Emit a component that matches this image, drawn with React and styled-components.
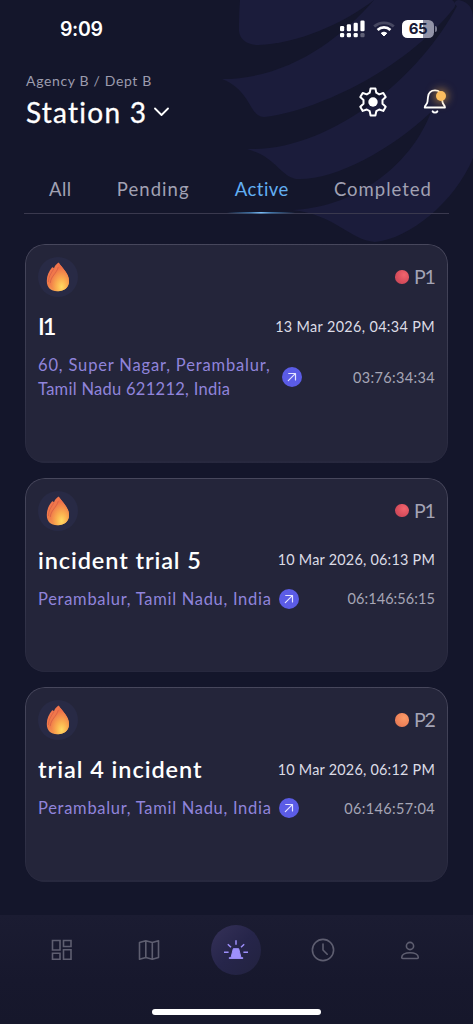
import React from "react";
import styled, { createGlobalStyle, css } from "styled-components";

const GlobalStyle = createGlobalStyle`
  * { box-sizing: border-box; }
  body { margin: 0; background: #14162b; }
`;

const Screen = styled.div`
  position: relative;
  width: 473px;
  height: 1024px;
  overflow: hidden;
  display: flex;
  flex-direction: column;
  background: #14162b;
  color: #fff;
  font-family: Lato, "Open Sans", sans-serif;
  white-space: nowrap;
`;

const Wings = styled.svg`
  position: absolute;
  top: 0;
  left: 0;
  pointer-events: none;
`;

const Content = styled.div`
  position: relative;
  flex: 1;
  display: flex;
  flex-direction: column;
`;

const StatusBar = styled.div`
  height: 57px;
  padding: 0 36px 0 60px;
  display: flex;
  align-items: center;
  justify-content: space-between;
`;

const Clock = styled.div`
  font: 600 19.5px/24px Inter, sans-serif;
  letter-spacing: -0.35px;
`;

const StatusIcons = styled.div`
  display: flex;
  align-items: center;
  gap: 7.5px;
`;

const Battery = styled.div`
  display: flex;
  align-items: center;
  gap: 1px;
  &::after {
    content: "";
    width: 2px;
    height: 6px;
    border-radius: 0 2px 2px 0;
    background: #77788d;
  }
`;

const BatteryBody = styled.div`
  width: 32px;
  height: 18px;
  border-radius: 5.5px;
  background: linear-gradient(90deg, #fff 65%, #9293a7 65%);
  color: #191a36;
  font: 700 15px/18px Inter, sans-serif;
  letter-spacing: -0.3px;
  text-align: center;
`;

const Header = styled.header`
  height: 99px;
  padding: 14px 23px 0 26px;
  display: flex;
  justify-content: space-between;
`;

const Agency = styled.div`
  font-size: 14px;
  line-height: 20px;
  letter-spacing: 0.65px;
  color: #9c9cae;
`;

const Station = styled.div`
  display: flex;
  align-items: center;
  gap: 7px;
  margin-top: 3px;
  font-size: 28px;
  line-height: 36px;
  letter-spacing: 1.25px;
  -webkit-text-stroke: 0.3px #fff;
`;

const Actions = styled.div`
  display: flex;
  align-items: flex-start;
  gap: 32.5px;
  padding-top: 16px;
`;

const BellButton = styled.div`
  position: relative;
  width: 30px;
  height: 30px;
`;

const BellDot = styled.span`
  position: absolute;
  top: 4px;
  left: 15.5px;
  width: 10px;
  height: 10px;
  border-radius: 50%;
  background: #fbbd5f;
  box-shadow: 0 0 8px 2px rgba(251, 180, 70, 0.55);
`;

const Tabs = styled.nav`
  height: 58px;
  margin: 0 24px;
  padding: 20px 17px 0 25px;
  display: flex;
  justify-content: space-between;
  background:
    linear-gradient(90deg, transparent, #3f74a8 35%, #78bdf8 50%, #3f74a8 65%, transparent) 203px 56px / 68px 1.5px no-repeat,
    linear-gradient(#3a394e, #3a394e) 0 56.5px / 100% 1.5px no-repeat;
`;

const Tab = styled.div`
  font-size: 18.5px;
  line-height: 26px;
  letter-spacing: ${(p) => p.$spacing || "0.5px"};
  color: ${(p) => (p.$active ? "#62aef2" : "#a1a1b3")};
`;

const CardList = styled.main`
  display: flex;
  flex-direction: column;
  gap: 15px;
  padding: 30px 25px 0;
`;

const Card = styled.article`
  position: relative;
  padding: 13px 13px 61.5px;
  border-radius: 20px;
  background: #24253a;
  &::before {
    content: "";
    position: absolute;
    inset: 0;
    padding: 1.4px;
    border-radius: inherit;
    background: linear-gradient(#47475c, #3a3b50 50%, #27283e);
    mask: linear-gradient(#000 0 0) content-box exclude, linear-gradient(#000 0 0);
  }
`;

const Row = styled.div`
  display: flex;
  align-items: center;
  justify-content: space-between;
  ${(p) => p.$title && css`height: 32px; margin-top: 13px;`}
  ${(p) => p.$place && css`margin-top: 11px;`}
`;

const IconDisc = styled.div`
  width: 40px;
  height: 40px;
  border-radius: 50%;
  background: #282a45;
  display: flex;
  align-items: center;
  justify-content: center;
`;

const Priority = styled.div`
  display: flex;
  align-items: center;
  gap: 5px;
  font-size: 19.5px;
  line-height: 24px;
  letter-spacing: -1.2px;
  padding-right: 0.5px;
  color: #a4a4b5;
`;

const Dot = styled.span`
  width: 13.5px;
  height: 13.5px;
  border-radius: 50%;
  background: ${(p) =>
    p.$level === "P1"
      ? "radial-gradient(circle at 65% 35%, #f2646d, #d64c5b 60%, #b9485a)"
      : "radial-gradient(circle at 65% 35%, #fb9b68, #ee8158 60%, #cf7155)"};
`;

const Title = styled.h2`
  margin: 0;
  font-size: 23.5px;
  font-weight: 600;
  line-height: 30px;
  letter-spacing: ${(p) => p.$spacing}px;
`;

const DateText = styled.div`
  font-size: 14.4px;
  letter-spacing: ${(p) => p.$spacing}px;
  color: #dcdce6;
`;

const Place = styled.div`
  display: flex;
  align-items: center;
  gap: 7.5px;
`;

const Address = styled.div`
  padding-right: ${(p) => p.$pad || 0}px;
  font-size: 16.5px;
  line-height: 24px;
  color: #9084db;
`;

const AddressLine = styled.div`
  letter-spacing: ${(p) => p.$spacing}px;
`;

const Timer = styled.div`
  font-size: 14.5px;
  letter-spacing: ${(p) => p.$spacing}px;
  color: #a6a6b6;
`;

const BottomBar = styled.footer`
  position: relative;
  height: 109px;
  padding-top: 10px;
  display: flex;
  flex-direction: column;
  align-items: center;
  justify-content: space-between;
  background: linear-gradient(#1b1c32, #17182d 60%, #16172b);
`;

const NavRow = styled.div`
  display: grid;
  grid-template-columns: repeat(5, 87px);
  justify-items: center;
  align-items: center;
  height: 50px;
  padding-right: 1px;
`;

const ActiveDisc = styled.div`
  width: 50px;
  height: 50px;
  border-radius: 50%;
  background: linear-gradient(135deg, #353158, #26254a 50%, #22223f);
  display: flex;
  align-items: center;
  justify-content: center;
`;

const HomeIndicator = styled.div`
  width: 169px;
  height: 6px;
  margin-bottom: 9px;
  border-radius: 3px;
  background: #fff;
`;

const WingArt = () => (
  <Wings width="473" height="250" viewBox="0 0 473 250" fill="#1b1c3b">
    <path d="M240 0C239 12 239 22 239 31C240 41 249 45 258 45C300 43 342 24 374 0Z" />
    <path d="M222 79C285 79 338 42 374 0H452C456 3 456 5 454 8C402 73 312 112 264 117C249 117 252 91 222 79Z" />
    <path d="M247 149C330 152 420 77 457 6C453 4 455 0 459 0Q473 3 473 18V158C455 202 409 239 375 242C350 240 334 214 292 210C350 208 409 170 431 112C390 151 333 181 296 179C280 176 276 157 247 149Z" />
  </Wings>
);

const Signal = () => (
  <svg width="25" height="18" viewBox="0 0 25 18" fill="#fff">
    <rect x="0" y="6" width="4.2" height="5.2" rx="1.3" />
    <rect x="6.8" y="4.2" width="4.2" height="7" rx="1.3" />
    <rect x="13.6" y="2.8" width="4.2" height="8.4" rx="1.3" />
    <rect x="20.4" y="0.4" width="4.2" height="10.8" rx="1.3" />
    <rect x="0" y="13" width="4.2" height="4.2" rx="1.3" />
    <rect x="6.8" y="13" width="4.2" height="4.2" rx="1.3" />
    <rect x="13.6" y="13" width="4.2" height="4.2" rx="1.3" />
    <rect x="20.4" y="13" width="4.2" height="4.2" rx="1.3" opacity="0.3" />
  </svg>
);

const Wifi = () => (
  <svg width="22" height="16" viewBox="0 0 22 16" fill="none" strokeWidth="2.7">
    <path d="M1.2 5.6C6.6 .5 15.4 .5 20.8 5.6" stroke="#474861" />
    <path d="M4.6 9C8.2 5.5 13.8 5.5 17.4 9" stroke="#fff" />
    <path d="M8.2 12.2Q11 10 13.8 12.2L11 15Z" fill="#fff" stroke="#fff" strokeWidth="1" strokeLinejoin="round" />
  </svg>
);

const Gear = () => (
  <svg width="30" height="30" viewBox="0 0 30 30" fill="none" stroke="#fff" strokeWidth="2" strokeLinejoin="round">
    <path d="M12.6 1.5h4.8l.9 4.2 2.9 1.7 4.1-1.4 2.4 4.1-3.2 3v3.7l3.2 3-2.4 4.1-4.1-1.4-2.9 1.7-.9 4.3h-4.8l-.9-4.3-2.9-1.7-4.1 1.4-2.4-4.1 3.2-3v-3.7l-3.2-3 2.4-4.1 4.1 1.4 2.9-1.7Z" />
    <circle cx="15" cy="15" r="4.7" fill="#fff" stroke="none" />
  </svg>
);

const Bell = () => (
  <svg width="30" height="30" viewBox="0 0 30 30" fill="none" stroke="#fff" strokeWidth="1.8" strokeLinecap="round" strokeLinejoin="round">
    <path d="M4.7 20.5H25c-.1-2.4-2.3-2.8-2.6-5.8l-.4-4.6C21.5 5.6 18.8 3.4 15 3.4S8.5 5.6 8 10.1l-.5 4.6c-.3 3-2.7 3.4-2.8 5.8Z" />
    <path d="M12.7 24.4c.9 1.6 3.7 1.6 4.6 0" strokeWidth="2" />
  </svg>
);

const Chevron = () => (
  <svg width="15" height="10" viewBox="0 0 15 10" fill="none" stroke="#fff" strokeWidth="1.8" strokeLinecap="round" strokeLinejoin="round">
    <path d="M1 1.5L7.5 8L14 1.5" />
  </svg>
);

const Flame = () => (
  <svg width="24" height="30" viewBox="0 0 24 30">
    <defs>
      <linearGradient id="flameBack" x1="0.2" y1="0" x2="0.7" y2="1">
        <stop offset="0" stopColor="#f4744f" />
        <stop offset="0.55" stopColor="#ee7a48" />
        <stop offset="1" stopColor="#f8b055" />
      </linearGradient>
      <radialGradient id="flameFront" cx="0.6" cy="0.85" r="0.8">
        <stop offset="0" stopColor="#ffda62" />
        <stop offset="0.35" stopColor="#fbb04f" />
        <stop offset="0.85" stopColor="#ee7049" />
      </radialGradient>
    </defs>
    <path d="M12.5 .5C9.9 2.4 8.6 4.2 8 6.2C7.4 5.6 6.9 5.3 6.2 5.2C3 8.8 .8 13.5 .8 19C.8 25.8 5.2 29.2 11 29.2C18 29.2 23 26 23 19C23 11.5 16.5 6.5 12.5 .5Z" fill="url(#flameBack)" />
    <path d="M12.8 .8C16.8 6.8 23 11.5 23 19C23 26 17.5 29.2 12.5 29.2C6.5 29.2 4 24.5 4.6 20C5.5 13.5 12.8 9.5 12.8 .8Z" fill="url(#flameFront)" />
    <path d="M8 6.5C4.5 12 2.5 15 2.4 20M12.2 5C10.5 12 4.8 14 4.3 21" fill="none" stroke="#c95444" strokeWidth=".8" opacity=".65" />
  </svg>
);

const Go = () => (
  <svg width="20" height="20" viewBox="0 0 20 20" fill="none">
    <circle cx="10" cy="10" r="10" fill="#5b5ce6" />
    <path d="M6.3 13.7L13.3 6.7M6.7 6.5H13.5V13" stroke="#e4e4ff" strokeWidth="1.2" strokeLinecap="round" strokeLinejoin="round" />
  </svg>
);

const NavSvg = styled.svg.attrs({ width: 26, height: 26, viewBox: "0 0 26 26", fill: "none" })`
  stroke: #5e5e70;
  stroke-width: 1.6;
  stroke-linejoin: round;
  stroke-linecap: round;
`;

const incidents = [
  {
    title: "I1",
    titleSpacing: -2,
    level: "P1",
    date: "13 Mar 2026, 04:34 PM",
    dateSpacing: 0.36,
    place: [
      { text: "60, Super Nagar, Perambalur,", spacing: 0.84 },
      { text: "Tamil Nadu 621212, India", spacing: 0.28 },
    ],
    pad: 4,
    timer: "03:76:34:34",
    timerSpacing: 0.35,
  },
  {
    title: "incident trial 5",
    titleSpacing: 0.9,
    level: "P1",
    date: "10 Mar 2026, 06:13 PM",
    dateSpacing: 0.24,
    place: [{ text: "Perambalur, Tamil Nadu, India", spacing: 0.71 }],
    timer: "06:146:56:15",
    timerSpacing: 0.08,
  },
  {
    title: "trial 4 incident",
    titleSpacing: 0.95,
    level: "P2",
    date: "10 Mar 2026, 06:12 PM",
    dateSpacing: 0.24,
    place: [{ text: "Perambalur, Tamil Nadu, India", spacing: 0.71 }],
    timer: "06:146:57:04",
    timerSpacing: 0.35,
  },
];

export default function App() {
  return (
    <Screen>
      <GlobalStyle />
      <WingArt />
      <Content>
        <StatusBar>
          <Clock>9:09</Clock>
          <StatusIcons>
            <Signal />
            <Wifi />
            <Battery><BatteryBody>65</BatteryBody></Battery>
          </StatusIcons>
        </StatusBar>
        <Header>
          <div>
            <Agency>Agency B / Dept B</Agency>
            <Station>Station 3 <Chevron /></Station>
          </div>
          <Actions>
            <Gear />
            <BellButton><Bell /><BellDot /></BellButton>
          </Actions>
        </Header>
        <Tabs>
          <Tab>All</Tab>
          <Tab $spacing="1.05px">Pending</Tab>
          <Tab $active>Active</Tab>
          <Tab $spacing="1px">Completed</Tab>
        </Tabs>
        <CardList>
          {incidents.map((item) => (
            <Card key={item.title}>
              <Row>
                <IconDisc><Flame /></IconDisc>
                <Priority><Dot $level={item.level} />{item.level}</Priority>
              </Row>
              <Row $title>
                <Title $spacing={item.titleSpacing}>{item.title}</Title>
                <DateText $spacing={item.dateSpacing}>{item.date}</DateText>
              </Row>
              <Row $place>
                <Place>
                  <Address $pad={item.pad}>
                    {item.place.map((line) => (
                      <AddressLine key={line.text} $spacing={line.spacing}>{line.text}</AddressLine>
                    ))}
                  </Address>
                  <Go />
                </Place>
                <Timer $spacing={item.timerSpacing}>{item.timer}</Timer>
              </Row>
            </Card>
          ))}
        </CardList>
      </Content>
      <BottomBar>
        <NavRow>
          <NavSvg>
            <path strokeLinejoin="miter" d="M3.5 3.5h7.5v9.5H3.5ZM14.5 3.5H22v6H14.5ZM3.5 16.3H11v6H3.5ZM14.5 12.8H22v9.5H14.5Z" />
          </NavSvg>
          <NavSvg>
            <path d="M3.5 5.5L9.8 3.7L16.3 5.5L22.5 3.7V20.5L16.3 22.3L9.8 20.5L3.5 22.3ZM9.8 3.7V20.5M16.3 5.5V22.3" />
          </NavSvg>
          <ActiveDisc>
            <svg width="26" height="22" viewBox="0 0 26 22" fill="#9d8ffb" stroke="#9d8ffb" strokeWidth="1.5">
              <path d="M10.3 9.7H15.7L18 18.7H19.8V19.4H6.2V18.7H8Z" strokeWidth="1" strokeLinejoin="round" />
              <path d="M13 1.3V5.8M4.8 5.2L8 8.2M21.2 5.2L18 8.2M1 13.3H5.6M20.4 13.3H25" />
            </svg>
          </ActiveDisc>
          <NavSvg>
            <circle cx="13" cy="13" r="10.6" />
            <path d="M13 7V13L17.2 17.2" />
          </NavSvg>
          <NavSvg>
            <circle cx="13" cy="9" r="3.6" />
            <path d="M4.7 20.5C4.7 17.5 8.5 15.8 13 15.8S21.3 17.5 21.3 20.5Q21.3 21.5 20.3 21.5H5.7Q4.7 21.5 4.7 20.5Z" />
          </NavSvg>
        </NavRow>
        <HomeIndicator />
      </BottomBar>
    </Screen>
  );
}
